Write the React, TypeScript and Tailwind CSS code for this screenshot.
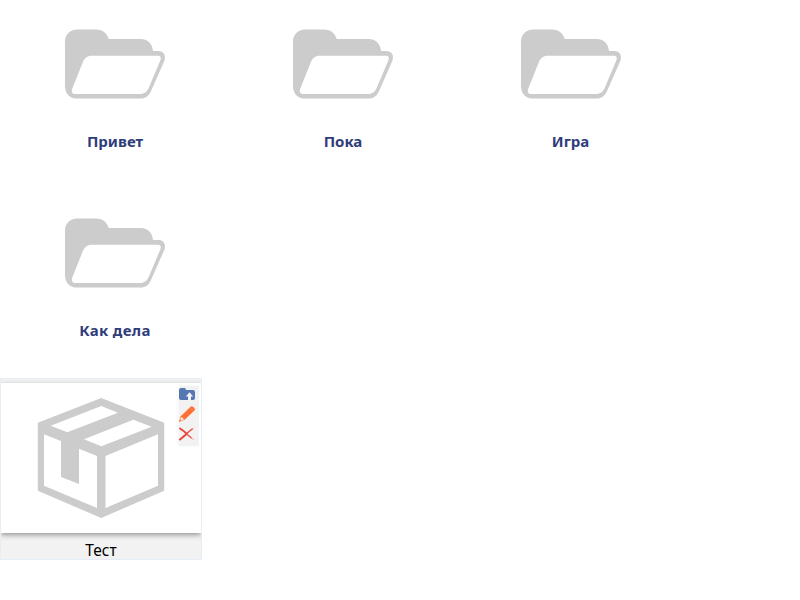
const folders = [
  { name: 'Привет', text: '' },
  { name: 'Пока', text: '' },
  { name: 'Игра', text: '-ml-px' },
  { name: 'Как дела', text: 'tracking-[0.3px]' },
];

function FolderIcon() {
  return (
    <svg width="102" height="72" viewBox="0 -0.4 102 72" className="block">
      <path
        fill="#cccccc"
        fillRule="evenodd"
        d="M1 13C1 6 6 1 13 1H32C39 1 43 5 44.7 10.6H77C84 10.6 88.5 15.6 89 22.6H94C100 22.6 102 27 100.5 32L87.5 61.5C85 67 82 70.2 76 70.2H13C6 70.2 1 65 1 58ZM27.7 27.3C23.5 27.3 20.3 30 18.7 34L8.3 60C7 63.5 8.5 65.7 11.5 65.7H76C80.5 65.7 83 63.5 84.7 59.7L96.3 32C97.5 29 96.5 27.3 94 27.3Z"
      />
    </svg>
  );
}

function BoxIcon() {
  return (
    <svg width="128" height="121" viewBox="37 398 128 121" className="block">
      <path
        fill="#cccccc"
        fillRule="evenodd"
        d="M101.2 398L164.2 422.7V490.8L101.2 518L37.8 490.8V422.7ZM50.7 425.7L67.3 432.3L118 412.7L101.3 406ZM84 439.3L101.3 446.3L151.7 426.7L133.3 419.7ZM44 434.3V485.8L97 508V456L79 448.7V484L61 477V441ZM105.5 456V508L158 485.8V434.3Z"
      />
    </svg>
  );
}

function UploadIcon() {
  return (
    <svg width="16" height="14" viewBox="0 0 16 14" className="block">
      <path fill="#5578b3" d="M0 2Q0 0 2 0H5.5Q7 0 7 2H14Q16 2 16 4V10Q16 12 14 12H2Q0 12 0 10Z" />
      <path fill="#f2f2f2" d="M10.5 4.2L14.2 8.6H12V12H9V8.6H6.8Z" />
    </svg>
  );
}

function PencilIcon() {
  return (
    <svg width="16" height="16" viewBox="0 0 16 16" className="block">
      <path fill="#ff7034" d="M11.6 .8Q12.7 -.3 14 .8L15.3 2.1Q16.6 3.5 15.2 4.8L5.4 14L0 16L1.4 10.4Z" />
      <path fill="#ffe9dc" d="M2 11Q4.6 11.4 4.9 13.8L2.6 14.7L1.2 13.4Z" />
      <path stroke="#ff9563" strokeWidth=".6" d="M11.3 2L14.3 4.8" />
    </svg>
  );
}

function DeleteIcon() {
  return (
    <svg width="16" height="14" viewBox="0 0 16 14" className="block" fill="none" strokeLinecap="round">
      <path stroke="#e8443c" strokeWidth="2" d="M1 1.5Q5 4 8 7M1 12.5Q4 10 7 7.5" />
      <path stroke="#ed5148" strokeWidth="1.4" d="M7 7.5Q10 4 13.5 1.8M7 6.5L12.5 11" />
      <path stroke="#f5aaa6" strokeWidth="1" d="M13.5 1.8L14.3 1.3M12.5 11L14.5 12.5" />
    </svg>
  );
}

export default function App() {
  return (
    <main className="h-[600px] w-[800px] overflow-hidden bg-white font-['Noto_Sans',sans-serif]">
      <section className="grid w-[684px] grid-cols-[repeat(3,228px)]">
        {folders.map(({ name, text }) => (
          <a key={name} className="flex h-[189px] w-[230px] flex-col items-center pt-7 text-[15px] leading-5 font-bold text-[#2f3d7a]">
            <FolderIcon />
            <span className={`mt-[31px] ${text}`}>{name}</span>
          </a>
        ))}
      </section>
      <article className="h-[182px] w-[202px] overflow-hidden border border-[#e4edf8] bg-[#f2f2f2] pt-1">
        <div className="relative flex h-[150px] justify-center bg-white pt-[15px] shadow-[0_2px_5px_rgba(0,0,0,0.38)]">
          <BoxIcon />
          <div className="absolute top-[3px] right-[2px] flex h-[60px] w-5 flex-col bg-[#f2f2f2] pt-[2px] shadow-[-2px_0_4px_rgba(0,0,0,0.03)]">
            <UploadIcon />
            <div className="mt-1"><PencilIcon /></div>
            <div className="mt-[5px]"><DeleteIcon /></div>
          </div>
        </div>
        <div className="pt-[7px] text-center text-[15.5px] leading-5 text-black">Тест</div>
      </article>
    </main>
  );
}
